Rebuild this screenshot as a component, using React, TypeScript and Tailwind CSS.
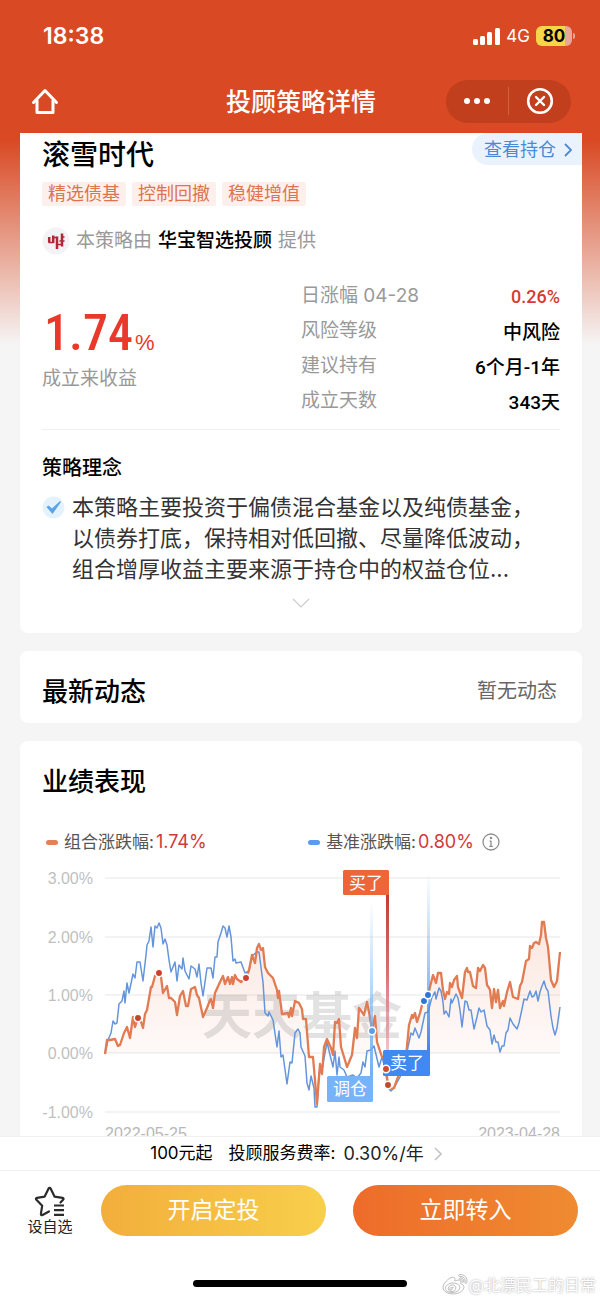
import React from 'react';
import { FaWeibo } from 'react-icons/fa';

const TAGS = ['精选债基', '控制回撤', '稳健增值'];

const STATS = [
  { label: '日涨幅 04-28', value: '0.26%', highlight: true },
  { label: '风险等级', value: '中风险' },
  { label: '建议持有', value: '6个月-1年' },
  { label: '成立天数', value: '343天' },
];

const GRID = [
  { label: '3.00%', y: 13 },
  { label: '2.00%', y: 72 },
  { label: '1.00%', y: 130 },
  { label: '0.00%', y: 188 },
  { label: '-1.00%', y: 247 },
];

const PORTFOLIO =
  '63,189 65,175 68,175 73,174 76,181 78,180 82,168 85,162 88,173 91,152 93,162 96,153 99,157 101,163 103,149 105,145 109,122 110,122 113,111 117,108 119,112 121,128 125,121 127,133 129,133 133,137 135,150 138,131 141,126 144,141 146,141 149,124 153,122 155,130 157,133 161,152 165,143 168,135 169,134 171,143 173,128 178,117 181,111 183,119 186,112 188,119 190,112 191,119 193,110 195,114 199,117 204,113 207,105 210,90 213,98 215,83 217,79 219,85 221,83 223,102 226,108 231,113 235,125 236,133 237,126 240,149 246,148 247,152 249,143 250,151 253,136 257,138 260,144 261,154 264,154 267,192 271,192 275,239 278,199 280,209 282,182 285,174 289,183 291,190 293,157 295,158 297,154 299,182 305,202 310,190 313,163 315,173 317,143 320,147 322,150 325,137 327,147 330,165 333,151 335,177 340,192 342,193 344,204 346,220 348,224 352,223 356,212 360,200 364,192 367,160 370,150 371,153 373,148 375,157 378,148 380,140 382,136 386,130 391,110 394,118 396,108 399,108 401,125 403,134 405,127 407,129 408,118 410,122 412,115 415,111 416,122 420,133 423,107 425,103 426,107 428,107 431,121 434,123 436,103 438,106 441,100 443,103 445,120 447,123 448,125 450,143 452,124 454,137 456,125 458,143 461,136 462,141 465,127 468,117 471,132 476,134 478,121 480,117 484,96 487,94 488,81 490,83 492,78 494,77 497,79 499,70 500,57 502,57 504,73 506,82 509,115 512,122 515,116 518,87';

const BENCHMARK =
  '63,189 66,175 69,168 71,156 73,159 75,158 77,139 80,136 82,126 83,138 85,118 87,128 91,109 93,113 95,97 98,97 101,116 104,90 105,80 107,76 109,62 111,82 113,61 115,63 117,58 119,63 121,79 123,74 125,80 127,95 129,107 133,97 135,116 137,100 140,104 141,93 143,106 147,114 149,101 153,104 155,112 157,99 159,118 161,131 165,103 169,103 171,113 173,92 175,92 176,77 179,68 181,61 183,63 185,72 187,61 189,72 191,96 193,94 194,98 199,97 203,108 207,106 210,91 215,87 217,87 220,110 221,117 223,148 226,151 227,147 231,155 235,182 237,166 239,192 241,190 245,219 248,197 250,198 253,168 256,164 258,168 259,182 263,191 265,218 267,225 269,211 272,223 273,242 275,242 277,207 280,205 285,177 288,190 291,202 293,186 295,210 297,192 298,202 302,205 305,212 311,210 315,213 319,208 321,197 323,202 325,186 329,185 332,181 337,202 340,192 343,203 346,223 349,226 352,223 358,212 363,200 366,182 369,168 371,170 373,163 377,173 379,167 383,148 386,147 390,132 393,127 394,134 397,123 399,126 401,137 402,149 404,146 407,152 409,134 410,138 414,129 416,133 418,145 420,162 423,136 425,137 427,145 429,145 432,164 435,152 437,143 439,147 442,145 445,161 448,165 450,179 452,170 454,177 456,177 458,187 460,181 462,181 464,168 466,165 468,153 471,159 475,164 477,158 480,144 482,134 485,135 488,126 490,132 492,131 494,126 496,136 498,127 500,121 502,116 504,123 506,126 509,151 511,163 513,170 515,163 518,142';

const DOTS = [
  { x: 96, y: 153, color: '#c8432c' },
  { x: 117, y: 108, color: '#c8432c' },
  { x: 204, y: 113, color: '#c8432c' },
  { x: 330, y: 166, color: '#5a9ee6' },
  { x: 344, y: 204, color: '#cf4a2f' },
  { x: 346, y: 220, color: '#c2492c' },
  { x: 382, y: 136, color: '#2f74d8' },
  { x: 386, y: 130, color: '#2f74d8' },
];

function StatusBar() {
  return (
    <div className="flex h-[72px] items-center justify-between pr-[25px] pl-[43px]">
      <span className="font-['Inter',sans-serif] text-[23px] font-semibold">18:38</span>
      <div className="flex items-center gap-1.5">
        <svg className="h-[17px] w-[27px]" viewBox="0 0 27 17" fill="currentColor">
          <rect x="0" y="11" width="5" height="6" rx="1.5" />
          <rect x="7" y="8" width="5" height="9" rx="1.5" />
          <rect x="14" y="4" width="5" height="13" rx="1.5" />
          <rect x="22" y="0" width="5" height="17" rx="1.5" />
        </svg>
        <span className="pt-0.5 text-[17px]">4G</span>
        <div className="flex items-center gap-px">
          <div className="flex h-5 w-9 items-center justify-center rounded-md bg-linear-to-r from-[#f6d54a] from-80% to-[#e8a79a] to-80% pt-0.5 font-['Inter',sans-serif] text-[17px] font-bold text-black">
            80
          </div>
          <span className="h-1.5 w-0.5 rounded-r bg-[#e8a79a]" />
        </div>
      </div>
    </div>
  );
}

function NavBar() {
  return (
    <div className="grid h-[61px] grid-cols-[1fr_auto_1fr] items-center pr-[29px] pb-[3px] pl-[31px]">
      <button type="button" aria-label="首页" className="justify-self-start">
        <svg className="h-7 w-7" viewBox="0 0 28 28" fill="none" stroke="currentColor" strokeWidth="3" strokeLinejoin="round" strokeLinecap="round">
          <path d="M2.500 15.500 14 3.500l11.500 12" />
          <path d="M6 13.500V25.500h16V13.500" />
        </svg>
      </button>
      <h1 className="pt-1 text-[25px] font-medium">投顾策略详情</h1>
      <div className="flex h-[43px] w-[125px] items-center justify-self-end rounded-full bg-[#c23f1e]">
        <button type="button" aria-label="更多" className="flex flex-1 justify-center">
          <svg className="h-2 w-7" viewBox="0 0 28 8" fill="currentColor">
            <circle cx="4" cy="4" r="3" />
            <circle cx="14" cy="4" r="3" />
            <circle cx="24" cy="4" r="3" />
          </svg>
        </button>
        <span className="h-7 w-px bg-[#d0603f]" />
        <button type="button" aria-label="关闭" className="flex flex-1 justify-center">
          <svg className="h-7 w-7" viewBox="0 0 28 28" fill="none" stroke="currentColor" strokeLinecap="round">
            <circle cx="14" cy="14" r="11.800" strokeWidth="2.600" />
            <path d="m10 10 8 8m0-8-8 8" strokeWidth="2.400" />
          </svg>
        </button>
      </div>
    </div>
  );
}

function StrategyCard() {
  return (
    <section className="rounded-b-lg bg-white px-[22px] pb-6">
      <div className="flex items-start justify-between">
        <h2 className="text-[28px] leading-11 font-medium">滚雪时代</h2>
        <a href="#holdings" className="-mr-[22px] flex h-8 items-center gap-2 rounded-l-full bg-[#eaf3fd] pt-0.5 pr-2.5 pl-3 text-lg text-[#4a8ad4]">
          查看持仓
          <svg className="h-3.5 w-2" viewBox="0 0 8 14" fill="none" stroke="currentColor" strokeWidth="1.800">
            <path d="m1 1 6 6-6 6" />
          </svg>
        </a>
      </div>

      <ul className="mt-[5px] flex gap-1.5">
        {TAGS.map((tag) => (
          <li key={tag} className="rounded-xs bg-[#fdf0ec] px-1.5 text-lg leading-6 text-[#dd7450]">
            {tag}
          </li>
        ))}
      </ul>

      <div className="mt-[21px] flex items-center gap-1.5 text-[19px] leading-7 text-[#999]">
        <svg className="h-7 w-7" viewBox="0 0 28 28">
          <circle cx="14" cy="14" r="13.500" fill="#f3f3f5" />
          <g fill="none" stroke="#b5253a">
            <path d="M7.200 10v5.500M11.200 8.500v7.500M15 9.500V22M20 6.500v13" strokeWidth="2.500" />
            <path d="M6.500 15.500h5M11 10.500h4.500M15 17.500h5.500M20 10h2.500M17.500 14h5" strokeWidth="1.600" />
          </g>
        </svg>
        <span>本策略由</span>
        <span className="font-medium text-black">华宝智选投顾</span>
        <span>提供</span>
      </div>

      <div className="mt-6 grid grid-cols-2 border-b border-[#f0f0f0] pb-2.5">
        <div className="pt-[26px]">
          <p className="flex h-[58px] items-baseline gap-0.5 pl-0.5 text-[#e8392b]">
            <span className="font-['Roboto_Condensed',Roboto,sans-serif] text-[50px] leading-14 font-medium">1.74</span>
            <span className="font-['Liberation_Sans',sans-serif] text-[22px] leading-none">%</span>
          </p>
          <p className="text-[19px] leading-8 text-[#999]">成立来收益</p>
        </div>
        <dl>
          {STATS.map((item) => (
            <div key={item.label} className="flex h-[35px] items-center justify-between text-[19px]">
              <dt className="text-[#999]">{item.label}</dt>
              <dd
                className={
                  item.highlight
                    ? "font-['Roboto',sans-serif] text-lg font-medium text-[#d93a34]"
                    : "pt-1 font-['Roboto','Noto_Sans_CJK_SC',sans-serif] font-medium text-black"
                }
              >
                {item.value}
              </dd>
            </div>
          ))}
        </dl>
      </div>

      <h3 className="mt-[22px] text-xl leading-8 font-medium">策略理念</h3>
      <div className="mt-2 flex items-start gap-[7px]">
        <svg className="mt-1 h-[23px] w-[23px] shrink-0" viewBox="0 0 23 23">
          <circle cx="11.500" cy="11.500" r="11" fill="#e4f2fd" />
          <path d="m4.500 11 2-1.500 3.500 3L18 5l1 1-8.500 12z" fill="#5da3e6" />
        </svg>
        <p className="text-[22px] leading-[31px] text-[#333]">
          本策略主要投资于偏债混合基金以及纯债基金，
          <br />
          以债券打底，保持相对低回撤、尽量降低波动，
          <br />
          组合增厚收益主要来源于持仓中的权益仓位...
        </p>
      </div>
      <button type="button" aria-label="展开" className="mx-auto mt-3 block">
        <svg className="h-3 w-[18px]" viewBox="0 0 18 12" fill="none" stroke="#ccc" strokeWidth="1.200">
          <path d="m1 2 8 8 8-8" />
        </svg>
      </button>
    </section>
  );
}

function Chart() {
  return (
    <svg className="w-full overflow-visible font-['Liberation_Sans','Noto_Sans_CJK_SC',sans-serif]" viewBox="0 0 518 282">
      <defs>
        <linearGradient id="area" x1="0" y1="57" x2="0" y2="188" gradientUnits="userSpaceOnUse">
          <stop offset="0" stopColor="#e9764c" stopOpacity="0.180" />
          <stop offset="1" stopColor="#e9764c" stopOpacity="0.040" />
        </linearGradient>
        <linearGradient id="buy" x1="0" y1="0" x2="0" y2="1">
          <stop offset="0" stopColor="#c23c30" />
          <stop offset="0.500" stopColor="#d4606a" stopOpacity="0.900" />
          <stop offset="1" stopColor="#e48a92" stopOpacity="0.500" />
        </linearGradient>
        <linearGradient id="adjust" x1="0" y1="0" x2="0" y2="1">
          <stop offset="0" stopColor="#6fb0ee" stopOpacity="0" />
          <stop offset="1" stopColor="#6fb0f4" />
        </linearGradient>
        <linearGradient id="sell" x1="0" y1="0" x2="0" y2="1">
          <stop offset="0" stopColor="#6fb0ee" stopOpacity="0" />
          <stop offset="1" stopColor="#3f86ea" />
        </linearGradient>
        <clipPath id="above-zero">
          <rect x="63" y="0" width="455" height="188" />
        </clipPath>
      </defs>

      {GRID.map((line) => (
        <g key={line.label}>
          <line x1="63" x2="518" y1={line.y} y2={line.y} stroke="#efefef" strokeWidth="1.300" />
          <text x="51" y={line.y + 6} textAnchor="end" fontSize="16" fill="#bfbfbf">
            {line.label}
          </text>
        </g>
      ))}

      <polygon points={`${PORTFOLIO} 518,188 63,188`} fill="url(#area)" clipPath="url(#above-zero)" />
      <text x="160" y="169" fontSize="50" fontWeight="700" fill="#8a8a8a" fillOpacity="0.250">
        天天基金
      </text>
      <polyline points={BENCHMARK} fill="none" stroke="#6495dc" strokeWidth="1.500" strokeLinejoin="round" />
      <polyline points={PORTFOLIO} fill="none" stroke="#e27a52" strokeWidth="2.300" strokeLinejoin="round" />

      <rect x="344" y="29" width="3" height="160" fill="url(#buy)" />
      <rect x="328" y="36" width="3" height="176" fill="url(#adjust)" />
      <rect x="385" y="6" width="3" height="180" fill="url(#sell)" />

      <rect x="301" y="5" width="46" height="25" rx="1.500" fill="#ec6637" />
      <rect x="285" y="211" width="46" height="26" rx="1.500" fill="#76b3f8" />
      <rect x="341" y="185" width="47" height="26" rx="1.500" fill="#4189f2" />
      <g fill="#fff" fontSize="17" textAnchor="middle">
        <text x="324" y="24">买了</text>
        <text x="308" y="230">调仓</text>
        <text x="365" y="204">卖了</text>
      </g>

      {DOTS.map((dot) => (
        <circle key={`${dot.x}-${dot.y}`} cx={dot.x} cy={dot.y} r="3.700" fill={dot.color} stroke="#fff" strokeWidth="1.500" />
      ))}

      <g fill="#b8b8b8" fontSize="16">
        <text x="63" y="274">2022-05-25</text>
        <text x="518" y="274" textAnchor="end">2023-04-28</text>
      </g>
    </svg>
  );
}

function PerformanceCard() {
  return (
    <section className="rounded-t-lg bg-white px-[22px] pt-[21px]">
      <h2 className="text-[26px] leading-10 font-medium">业绩表现</h2>
      <div className="mt-[26px] mb-[9px] grid grid-cols-[51%_49%] pl-1 text-[17px] leading-7 text-[#555]">
        <div className="flex items-center gap-1.5">
          <span className="h-[5px] w-3 rounded-full bg-[#e57f58]" />
          <span>
            组合涨跌幅:<span className="ml-0.5 text-lg leading-7 text-[#cf3a37]">1.74%</span>
          </span>
        </div>
        <div className="flex items-center gap-1.5">
          <span className="h-[5px] w-3 rounded-full bg-[#5a9af0]" />
          <span>
            基准涨跌幅:<span className="ml-0.5 text-lg leading-7 text-[#cf3a37]">0.80%</span>
          </span>
          <button type="button" aria-label="说明" className="ml-0.5">
            <svg className="h-[18px] w-[18px]" viewBox="0 0 18 18" fill="none" stroke="#8f8f8f" strokeWidth="1.300">
              <circle cx="9" cy="9" r="8" />
              <path d="M9 7.800V13.500M7.500 8.200H9M7.200 13.300h3.600" />
              <circle cx="9" cy="5" r="0.600" fill="#8f8f8f" />
            </svg>
          </button>
        </div>
      </div>
      <Chart />
    </section>
  );
}

function BottomBar() {
  return (
    <footer className="relative shrink-0 bg-white">
      <a href="#fee" className="flex h-[35px] items-center justify-center border-y border-[#f0f0f0] pr-2 text-[17px] text-black">
        <span className="mr-4">100元起</span>
        <span className="mr-2">投顾服务费率:</span>
        <span className="mr-2.5 text-lg text-[#222]">0.30%/年</span>
        <svg className="h-3.5 w-2" viewBox="0 0 8 14" fill="none" stroke="#c4c4c4" strokeWidth="1.600">
          <path d="m1 1 6 6-6 6" />
        </svg>
      </a>
      <div className="flex items-center gap-[27px] px-[22px] pt-3.5">
        <button type="button" className="flex w-14 shrink-0 flex-col items-center text-[15px] leading-[19px] text-[#222]">
          <svg className="h-8 w-8" viewBox="0 0 32 32" fill="none" stroke="#2b2b2b" strokeWidth="2.200" strokeLinecap="round" strokeLinejoin="round">
            <path d="M15 26.500 8.500 30c-1 .5-1.800 0-1.600-1.100l1.300-8.200L2.400 14.800c-.8-.8-.5-1.800.6-2l7.700-1.200L14.600 3.500c.5-1 1.500-1 2 0l3.900 8.100 8 1.200c1.100.2 1.400 1.200.6 2l-2.600 2.700" />
            <path d="M20 20.500h10M20 25.200h10M20 29.900h10" strokeLinecap="butt" />
          </svg>
          设自选
        </button>
        <div className="-ml-1 grid flex-1 grid-cols-2 gap-[27px] text-[23px] text-white">
          <button type="button" className="h-[51px] rounded-full bg-linear-to-r from-[#f2ae3b] to-[#f8cf4b]">
            开启定投
          </button>
          <button type="button" className="h-[51px] rounded-full bg-linear-to-r from-[#ee6b2a] to-[#ef8b31]">
            立即转入
          </button>
        </div>
      </div>
      <div className="mx-auto mt-11 mb-3 h-[7px] w-[214px] rounded-full bg-black" />
      <div className="absolute right-1 bottom-0.5 flex items-center gap-0.5 text-base text-white [text-shadow:0_0_2px_#999]">
        <FaWeibo className="h-6 w-6 overflow-visible fill-white stroke-[#999] stroke-[14px]" />
        <span>@北漂民工的日常</span>
      </div>
    </footer>
  );
}

export default function App() {
  return (
    <div className="flex h-screen flex-col bg-[#f5f5f5] font-['Inter','Noto_Sans_CJK_SC',sans-serif] text-black">
      <header className="shrink-0 bg-[#d94a24] text-white">
        <StatusBar />
        <NavBar />
      </header>
      <main className="flex min-h-0 flex-1 flex-col overflow-hidden bg-[linear-gradient(#d94a24_8px,#f5f5f5_212px)] pr-[18px] pl-5">
        <div className="space-y-[18px]">
          <StrategyCard />
          <section className="flex h-[72px] items-center justify-between rounded-lg bg-white pt-2 pr-[25px] pl-[22px]">
            <h2 className="text-[26px] font-medium">最新动态</h2>
            <span className="text-xl text-[#666]">暂无动态</span>
          </section>
          <PerformanceCard />
        </div>
      </main>
      <BottomBar />
    </div>
  );
}
